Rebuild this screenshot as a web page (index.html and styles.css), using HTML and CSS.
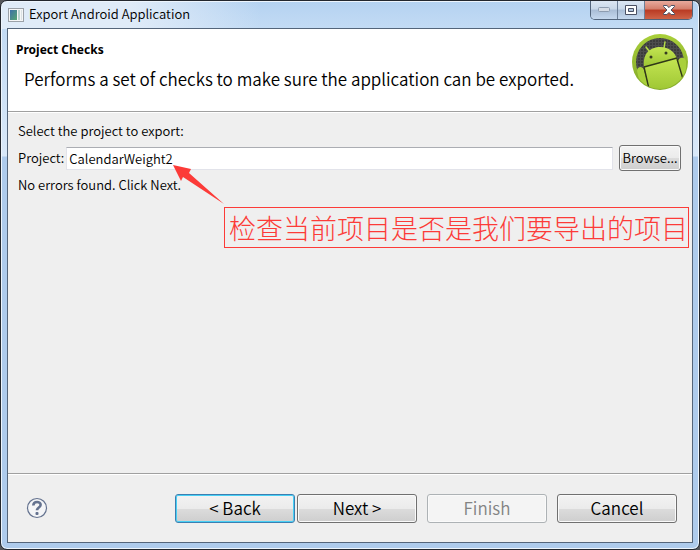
FILE: index.html
```
<!DOCTYPE html>
<html lang="en">
<head>
<meta charset="utf-8">
<title>Export Android Application</title>
<link rel="stylesheet" href="styles.css">
</head>
<body>
<div class="window">
  <header class="titlebar">
    <svg class="app-icon" width="16" height="14" viewBox="0 0 16 14" aria-hidden="true">
      <defs><linearGradient id="pane" x1="0" y1="0" x2="1" y2="1"><stop offset="0" stop-color="#3d70a8"/><stop offset="1" stop-color="#57a672"/></linearGradient></defs>
      <rect x=".5" y=".5" width="15" height="13" fill="#f5f6f7" stroke="#9ba1a8"/>
      <rect x="2" y="2" width="7" height="10" fill="url(#pane)"/>
      <rect x="10" y="2" width="2" height="10" fill="#b9d3cf"/>
      <rect x="13" y="2" width="1" height="10" fill="#dbe2e4"/>
    </svg>
    <span class="title">Export Android Application</span>
    <div class="caption-buttons">
      <button class="cap" aria-label="Minimize" disabled><svg width="13" height="6" viewBox="0 0 13 6"><rect x=".5" y=".5" width="11" height="4" rx="1" fill="#d5dce6" stroke="#8d9cb0"/></svg></button>
      <button class="cap" aria-label="Maximize"><svg width="12" height="10" viewBox="0 0 12 10"><path fill="#fff" stroke="#4b5164" fill-rule="evenodd" d="M.5.5h11v9H.5zM3.500 3.500v3h5v-3z"/></svg></button>
      <button class="cap close" aria-label="Close"><svg width="12" height="10" viewBox="0 0 12 10"><path fill="#fff" stroke="#4b5164" d="M.5.5h3.400L6 2.600 8.100.5h3.400v1L8 5l3.500 3.500v1H8.100L6 7.400 3.900 9.500H.5v-1L4 5 .5 1.500z"/></svg></button>
    </div>
  </header>
  <main class="client">
    <section class="banner">
      <div class="banner-text">
        <h1>Project Checks</h1>
        <p>Performs a set of checks to make sure the application can be exported.</p>
      </div>
      <svg class="android" width="58" height="58" viewBox="0 0 58 58" role="img" aria-label="Android">
        <defs>
          <linearGradient id="ring" x1="0" y1="0" x2="0" y2="1"><stop offset="0" stop-color="#a9cf3a"/><stop offset="1" stop-color="#82a828"/></linearGradient>
          <linearGradient id="body" x1="0" y1="0" x2="0" y2="1"><stop offset="0" stop-color="#c4e552"/><stop offset="1" stop-color="#9cc532"/></linearGradient>
          <pattern id="mesh" width="3" height="3" patternUnits="userSpaceOnUse"><rect width="3" height="3" fill="#3c3c3c"/><path d="M0 .5h3M.5 0v3" stroke="#4d4d4d"/></pattern>
          <clipPath id="disc"><circle cx="29" cy="29" r="27"/></clipPath>
        </defs>
        <circle cx="29" cy="29" r="28" fill="url(#ring)"/>
        <circle cx="29" cy="29" r="24" fill="url(#mesh)"/>
        <g clip-path="url(#disc)">
          <path d="M18 18l-3-4M33 15l1-6" stroke="#b5dc48" stroke-width="1.500" stroke-linecap="round"/>
          <path fill="url(#body)" d="M13 34C11 20 20 14 29 14c9 0 15 5 17 12z"/>
          <path fill="url(#body)" d="M13 34l33-9 7 26-16 8H19z"/>
          <path fill="#a9d03c" d="M6 38c0-5 6-5 7-1l5 18-9-4zM47 29c0-5 7-6 8-1v16l-4 3z"/>
          <path d="M13 34l33-9M13 34l5 22M46 26l6 20" stroke="#303818" stroke-width="1.400" fill="none"/>
        </g>
        <circle cx="20" cy="24" r="1.500" fill="#353b20"/><circle cx="35" cy="20" r="1.500" fill="#353b20"/>
      </svg>
    </section>
    <section class="page">
      <p class="line">Select the project to export:</p>
      <div class="field">
        <label for="project">Project:</label>
        <input id="project" type="text" value="CalendarWeight2">
        <button class="btn browse">Browse...</button>
      </div>
      <p class="line">No errors found. Click Next.</p>
      <div class="note" lang="zh-CN">检查当前项目是否是我们要导出的项目</div>
      <svg class="arrow" width="52" height="42" viewBox="0 0 52 42" aria-hidden="true"><path fill="#fc3b38" d="M0 1l18 4-2 4 35 31-41-27-2 4z"/></svg>
    </section>
    <footer class="actions">
      <button class="help" aria-label="Help"><svg width="22" height="22" viewBox="0 0 22 22"><circle cx="11" cy="11" r="9.500" fill="#f4f5f7" stroke="#64728f" stroke-width="1.200"/><path d="M7.300 8.500C7.500 3.800 14.800 4.200 14.600 8c-.1 2.500-3.600 2.500-3.600 5.200" fill="none" stroke="#64728f" stroke-width="2.600"/><rect x="9.500" y="15" width="3" height="3" rx="1" fill="#64728f"/></svg></button>
      <div class="nav">
        <button class="btn big default">&lt; Back</button>
        <button class="btn big">Next &gt;</button>
      </div>
      <button class="btn big" disabled>Finish</button>
      <button class="btn big">Cancel</button>
    </footer>
  </main>
</div>
</body>
</html>
```
FILE: styles.css
```
* { box-sizing: border-box; }

body {
  margin: 0;
  background: #55565a;
  color: #000;
  font: 350 13px/16px "Noto Sans CJK SC", sans-serif;
}

h1, p { margin: 0; }
button, input { font: inherit; color: inherit; }
svg { display: block; }

.window {
  display: flex;
  flex-direction: column;
  min-height: 100vh;
  padding: 0 6px 6px;
  border: 1px solid #23272e;
  border-radius: 7px;
  background:
    linear-gradient(90deg, #dfebf8 0, #dfebf8 130px, transparent 260px) 0 0 / 100% 28px no-repeat,
    linear-gradient(180deg, #b4d2f1 0, #c3dbf4 28px, #d9e8f8 155px, #aecbec 156px);
  box-shadow: inset 0 0 0 1px #edf5fd;
}

.titlebar {
  display: flex;
  align-items: flex-start;
  height: 27px;
  padding-left: 1px;
}

.app-icon { margin-top: 7px; }

.title {
  flex: 1;
  padding: 5px 5px 0;
}

.caption-buttons {
  display: flex;
  height: 19px;
  border: 1px solid #52647b;
  border-top: 0;
  border-radius: 0 0 5px 5px;
  overflow: hidden;
}

.cap {
  display: grid;
  place-items: center;
  width: 27px;
  padding: 0;
  border: 0;
  border-right: 1px solid #6c7f98;
  background: linear-gradient(#dbe6f3 0, #c9d8e9 45%, #a9bdd6 50%, #c5d8ee 100%);
}

.close {
  width: 47px;
  border-right: 0;
  background: linear-gradient(#e8aa9d 0, #d47e6c 45%, #b93a23 50%, #cf6347 100%);
}

.client {
  flex: 1;
  display: flex;
  flex-direction: column;
  border: 1px solid #54657a;
  background: #efefef;
}

.banner {
  display: flex;
  justify-content: space-between;
  height: 83px;
  padding: 4px 3px 0 8px;
  border-bottom: 1px solid #a0a0a0;
  background: #fff;
}

.banner h1 {
  padding-top: 9px;
  font: bold 12px/16px "Noto Sans", sans-serif;
}

.banner p {
  padding: 9px 0 0 8px;
  font-size: 17px;
  line-height: 24px;
}

.android { flex: none; }

.page {
  position: relative;
  flex: 1;
  padding: 10px 11px 0 10px;
  border-top: 1px solid #fff;
}

.field {
  display: flex;
  align-items: center;
  margin: 6px 0;
}

.field input {
  flex: 1;
  min-width: 0;
  height: 23px;
  margin: 0 6px 0 2px;
  padding: 0 2px;
  border: 1px solid #e2e3ea;
  border-top-color: #abadb3;
  background: #fff;
}

.btn {
  border: 1px solid #707070;
  border-radius: 3px;
  background: linear-gradient(#f3f3f3 0, #ebebeb 50%, #dcdcdc 50%, #cecece 100%);
  box-shadow: inset 0 0 0 1px #fafafa;
  padding: 0;
}

.browse { width: 62px; height: 26px; }

.note {
  position: absolute;
  top: 94px;
  right: 3px;
  padding: 0 0 0 4px;
  border: 1px solid #fc3b38;
  color: #fc3b38;
  font: 300 27px/39px "Noto Sans CJK SC", sans-serif;
  white-space: nowrap;
}

.arrow {
  position: absolute;
  top: 51px;
  left: 165px;
}

.actions {
  display: flex;
  align-items: center;
  gap: 10px;
  height: 69px;
  padding: 0 15px 0 18px;
  border-top: 1px solid #a0a0a0;
  box-shadow: inset 0 1px #fff;
}

.help {
  padding: 0;
  border: 0;
  background: none;
}

.nav {
  display: flex;
  gap: 2px;
  margin-left: auto;
}

.big {
  width: 120px;
  height: 29px;
  font-size: 17px;
}

.default {
  border-color: #3c7fb1;
  box-shadow: inset 0 0 0 1px #48d0f5;
}

.btn:disabled {
  border-color: #adb2b5;
  background: #f4f4f4;
  color: #838383;
}
```
